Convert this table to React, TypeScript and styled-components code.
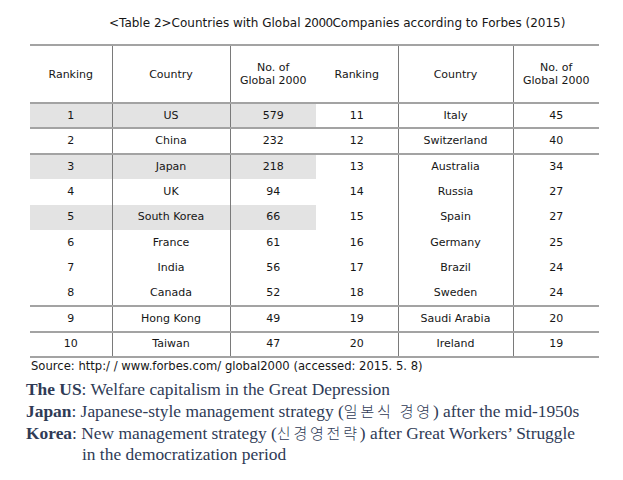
import React from "react";
import styled, { createGlobalStyle } from "styled-components";

const Global = createGlobalStyle`
  html, body { margin: 0; padding: 0; background: #ffffff; }
  body { width: 623px; height: 480px; overflow: hidden; }
`;

const Page = styled.div`
  width: 623px;
  height: 480px;
  display: flex;
  flex-direction: column;
  font-family: "DejaVu Sans", sans-serif;
  color: #161616;
`;

const Title = styled.div`
  padding: 16px 0 0 109px;
  font-size: 12px;
  line-height: 14px;
  white-space: nowrap;
  height: 44px;
  box-sizing: border-box;
`;

const Tight = styled.span`
  letter-spacing: -0.6px;
`;

const TableWrap = styled.div`
  padding-left: 30px;
`;

const Table = styled.table`
  width: 569px;
  border-collapse: collapse;
  table-layout: fixed;
  border-top: 2px solid #a3a3a3;
  border-bottom: 2px solid #a3a3a3;
  font-size: 11px;
  text-align: center;
`;

const HeadRow = styled.tr`
  height: 58px;
  border-bottom: 2px solid #a3a3a3;
`;

const Row = styled.tr<{ $rule?: boolean }>`
  height: 25.4px;
  border-bottom: ${(p) => (p.$rule ? "2px solid #a3a3a3" : "none")};
`;

const Th = styled.th<{ $divider?: boolean }>`
  font-weight: normal;
  padding: 0;
  line-height: 13px;
  vertical-align: middle;
  border-left: ${(p) => (p.$divider ? "1px solid #7a7a7a" : "none")};
`;

const Td = styled.td<{ $divider?: boolean; $shade?: boolean }>`
  padding: 0;
  line-height: 14px;
  vertical-align: middle;
  white-space: nowrap;
  background: ${(p) => (p.$shade ? "#e3e3e3" : "transparent")};
  border-left: ${(p) => (p.$divider ? "1px solid #7a7a7a" : "none")};
`;

const Source = styled.div`
  padding: 1px 0 0 31px;
  font-size: 11.6px;
  line-height: 14px;
  white-space: nowrap;
`;

const Notes = styled.div`
  margin-top: 6px;
  padding-left: 26px;
  font-family: "Liberation Serif", "Noto Sans CJK KR", serif;
  font-size: 17.4px;
  line-height: 21px;
  color: #2f3b56;
  white-space: nowrap;
`;

const Line = styled.div<{ $indent?: boolean }>`
  padding-left: ${(p) => (p.$indent ? "56px" : "0")};
`;

const Key = styled.b`
  font-weight: bold;
`;

const Ko = styled.span`
  font-family: "Noto Sans CJK KR", sans-serif;
  font-weight: 300;
  font-size: 15px;
  letter-spacing: 2.8px;
`;

type Entry = { rank: number; country: string; count: number };

const left: Entry[] = [
  { rank: 1, country: "US", count: 579 },
  { rank: 2, country: "China", count: 232 },
  { rank: 3, country: "Japan", count: 218 },
  { rank: 4, country: "UK", count: 94 },
  { rank: 5, country: "South Korea", count: 66 },
  { rank: 6, country: "France", count: 61 },
  { rank: 7, country: "India", count: 56 },
  { rank: 8, country: "Canada", count: 52 },
  { rank: 9, country: "Hong Kong", count: 49 },
  { rank: 10, country: "Taiwan", count: 47 },
];

const right: Entry[] = [
  { rank: 11, country: "Italy", count: 45 },
  { rank: 12, country: "Switzerland", count: 40 },
  { rank: 13, country: "Australia", count: 34 },
  { rank: 14, country: "Russia", count: 27 },
  { rank: 15, country: "Spain", count: 27 },
  { rank: 16, country: "Germany", count: 25 },
  { rank: 17, country: "Brazil", count: 24 },
  { rank: 18, country: "Sweden", count: 24 },
  { rank: 19, country: "Saudi Arabia", count: 20 },
  { rank: 20, country: "Ireland", count: 19 },
];

const shaded = new Set([0, 2, 4]);
const ruled = new Set([0, 1, 7, 8]);

export default function App() {
  return (
    <Page>
      <Global />
      <Title>
        &lt;Table 2&gt;Countries with Global <Tight>2000</Tight>Companies according to Forbes (2015)
      </Title>
      <TableWrap>
        <Table>
          <colgroup>
            <col style={{ width: 82 }} />
            <col style={{ width: 118 }} />
            <col style={{ width: 86 }} />
            <col style={{ width: 82 }} />
            <col style={{ width: 115 }} />
            <col style={{ width: 86 }} />
          </colgroup>
          <thead>
            <HeadRow>
              <Th>Ranking</Th>
              <Th $divider>Country</Th>
              <Th $divider>
                No. of
                <br />
                Global 2000
              </Th>
              <Th>Ranking</Th>
              <Th $divider>Country</Th>
              <Th $divider>
                No. of
                <br />
                Global 2000
              </Th>
            </HeadRow>
          </thead>
          <tbody>
            {left.map((l, i) => {
              const r = right[i];
              const s = shaded.has(i);
              return (
                <Row key={l.rank} $rule={ruled.has(i)}>
                  <Td $shade={s}>{l.rank}</Td>
                  <Td $shade={s} $divider>
                    {l.country}
                  </Td>
                  <Td $shade={s} $divider>
                    {l.count}
                  </Td>
                  <Td>{r.rank}</Td>
                  <Td $divider>{r.country}</Td>
                  <Td $divider>{r.count}</Td>
                </Row>
              );
            })}
          </tbody>
        </Table>
      </TableWrap>
      <Source>Source: http:/ / www.forbes.com/ global2000 (accessed: 2015. 5. 8)</Source>
      <Notes>
        <Line>
          <Key>The US</Key>: Welfare capitalism in the Great Depression
        </Line>
        <Line>
          <Key>Japan</Key>: Japanese-style management strategy (<Ko>일본식 경영</Ko>) after the mid-1950s
        </Line>
        <Line>
          <Key>Korea</Key>: New management strategy (<Ko>신경영전략</Ko>) after Great Workers’ Struggle
        </Line>
        <Line $indent>in the democratization period</Line>
      </Notes>
    </Page>
  );
}
